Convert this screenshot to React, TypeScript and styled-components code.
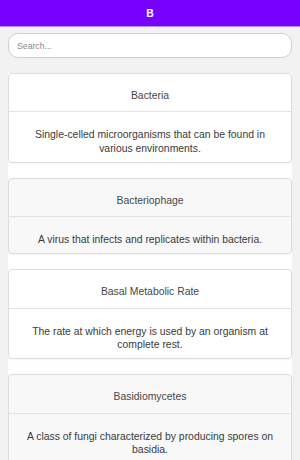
import React from "react";
import styled, { createGlobalStyle } from "styled-components";

const GlobalStyle = createGlobalStyle`
  html, body {
    margin: 0;
    padding: 0;
    background: #f2f2f2;
    font-family: "Liberation Sans", Arial, sans-serif;
  }
  * { box-sizing: border-box; }
`;

const Header = styled.header`
  height: 26px;
  background: #7700ff;
  display: flex;
  align-items: center;
  justify-content: center;
  color: #ffffff;
  font-weight: 700;
  font-size: 10.4px;
  box-shadow: 0 1px 0 #b48cf0;
`;

const Main = styled.main`
  padding: 7px 8px 0 8px;
  display: flex;
  flex-direction: column;
  gap: 15px;
`;

const Search = styled.input`
  width: 100%;
  height: 25px;
  border: 1px solid #cfcfcf;
  border-radius: 10px;
  padding: 0 8px;
  font-family: "Liberation Sans", Arial, sans-serif;
  font-size: 8.7px;
  background: #ffffff;
  outline: none;
  &::placeholder { color: #8a8a8a; }
`;

const List = styled.ul`
  list-style: none;
  margin: 0;
  padding: 0;
  background: #ffffff;
  display: flex;
  flex-direction: column;
  gap: 15px;
`;

const Card = styled.li<{ $alt: boolean }>`
  border: 1px solid #dcdcdc;
  border-radius: 4px;
  background: ${(p) => (p.$alt ? "#f8f8f8" : "#ffffff")};
  box-shadow: 0 1px 2px rgba(0, 0, 0, 0.04);
  color: #3a3a3a;
  font-size: 10.4px;
  line-height: 13.3px;
  text-align: center;
`;

const Term = styled.div`
  padding: 15px 14px 9px;
  border-bottom: 1px solid #e2e2e2;
  color: #474747;
`;

const Definition = styled.div`
  padding: 16px 14px 7px;
`;

const terms: [string, string][] = [
  ["Bacteria", "Single-celled microorganisms that can be found in various environments."],
  ["Bacteriophage", "A virus that infects and replicates within bacteria."],
  ["Basal Metabolic Rate", "The rate at which energy is used by an organism at complete rest."],
  ["Basidiomycetes", "A class of fungi characterized by producing spores on basidia."],
  ["Base Pair", "Two complementary nitrogenous bases bonded together in DNA or RNA."],
  ["Benthic Zone", "The ecological region at the lowest level of a body of water."],
  ["Beta Cells", "Cells in the pancreas that produce and release insulin."],
  ["Biceps", "A large muscle on the front of the upper arm."],
  ["Bicuspid Valve", "The heart valve between the left atrium and left ventricle."],
  ["Bilateral Symmetry", "A body plan in which the left and right sides are mirror images."],
  ["Bile", "A fluid produced by the liver that aids in the digestion of fats."],
  ["Binary Fission", "Asexual reproduction in which a cell divides into two equal parts."],
  ["Binomial Nomenclature", "The two-part naming system for species using genus and species names."],
  ["Bioaccumulation", "The gradual buildup of substances in an organism over time."],
  ["Biochemistry", "The study of chemical processes within living organisms."],
  ["Biodiversity", "The variety of life in a particular habitat or ecosystem."],
  ["Biofilm", "A community of microorganisms attached to a surface."],
  ["Biogeography", "The study of the distribution of species across geographic areas."],
  ["Bioinformatics", "The use of computer science to analyze biological data."],
  ["Biology", "The scientific study of life and living organisms."],
  ["Bioluminescence", "The production and emission of light by a living organism."],
  ["Biomass", "The total mass of organisms in a given area or volume."],
  ["Biome", "A large community of plants and animals occupying a major habitat."],
  ["Biosphere", "The regions of the Earth occupied by living organisms."],
  ["Biotechnology", "The use of living systems to develop useful products."],
  ["Biotic Factor", "A living component that affects another organism or its environment."],
  ["Bipedalism", "A form of locomotion in which an organism moves on two legs."],
  ["Blastocyst", "An early embryo consisting of a hollow ball of cells."],
  ["Blastula", "A hollow sphere of cells formed during early embryonic development."],
  ["Blood", "A fluid that circulates nutrients and oxygen throughout the body."],
  ["Blood Pressure", "The pressure of circulating blood against the walls of blood vessels."],
  ["Body Mass Index", "A measure of body fat based on height and weight."],
  ["Bone Marrow", "Soft tissue inside bones that produces blood cells."],
  ["Botany", "The scientific study of plants."],
  ["Brain", "The organ that serves as the center of the nervous system."],
  ["Brainstem", "The part of the brain that connects to the spinal cord."],
  ["Bronchi", "The main passageways that carry air into the lungs."],
  ["Bronchioles", "Small branches of the bronchi within the lungs."],
  ["Bryophytes", "Nonvascular plants such as mosses and liverworts."],
  ["Budding", "Asexual reproduction in which a new organism grows from an outgrowth."],
  ["Buffer", "A solution that resists changes in pH."],
  ["Bulb", "An underground storage organ made of fleshy leaves."],
  ["Bundle Sheath", "Cells surrounding the vascular bundles in a leaf."],
  ["B Cells", "White blood cells that produce antibodies."],
];

export default function App() {
  return (
    <>
      <GlobalStyle />
      <Header>B</Header>
      <Main>
        <Search type="text" placeholder="Search..." />
        <List>
          {terms.map(([term, def], i) => (
            <Card key={term} $alt={i % 2 === 1}>
              <Term>{term}</Term>
              <Definition>{def}</Definition>
            </Card>
          ))}
        </List>
      </Main>
    </>
  );
}
